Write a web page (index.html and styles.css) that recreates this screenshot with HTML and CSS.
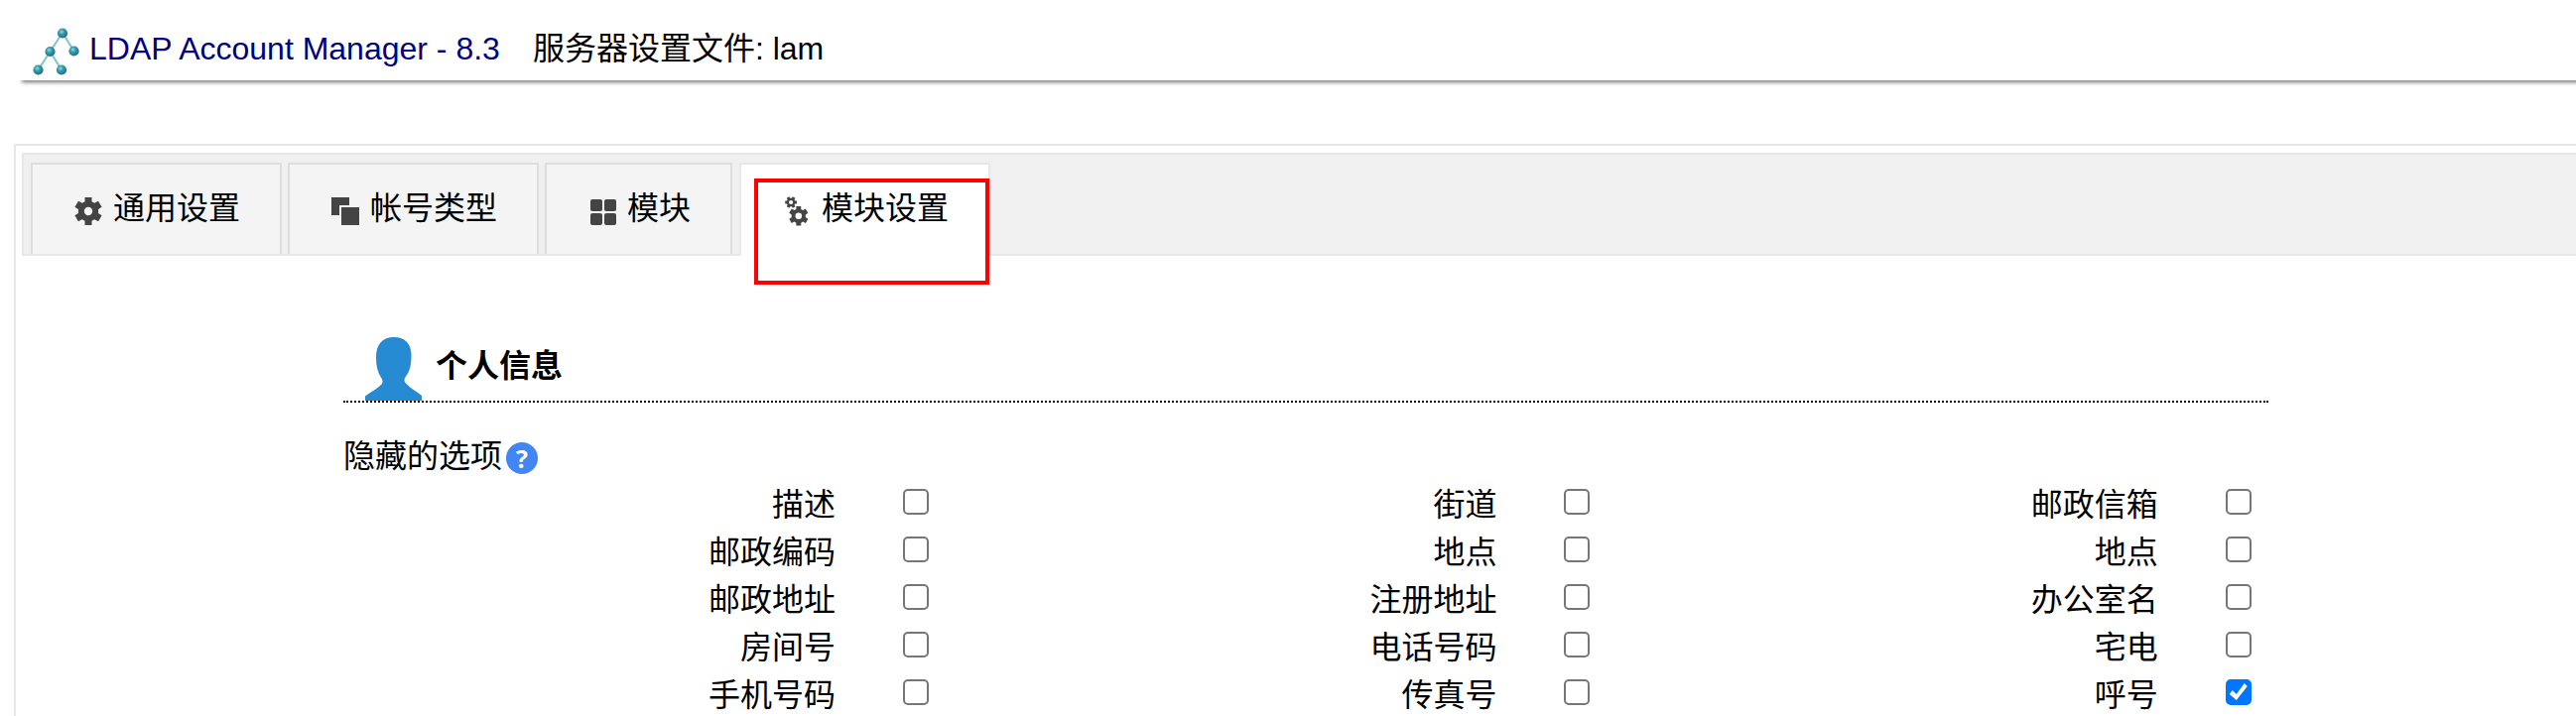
FILE: index.html
```
<!DOCTYPE html>
<html lang="zh-CN">
<head>
<meta charset="utf-8">
<title>LDAP Account Manager</title>
<link rel="stylesheet" href="styles.css">
</head>
<body>
<header class="header">
  <svg class="logo" width="50" height="50" viewBox="0 0 50 50">
    <defs>
      <radialGradient id="ball" cx="0.4" cy="0.35" r="0.65">
        <stop offset="0" stop-color="#8fdce6"/>
        <stop offset="0.4" stop-color="#359dae"/>
        <stop offset="1" stop-color="#256d7a"/>
      </radialGradient>
    </defs>
    <path d="M32 7 19.500 26 7.500 44.500M32 7 43.500 25.500M19.500 26 31 44.500" fill="none" stroke="#86c6d0" stroke-width="2.200"/>
    <g fill="url(#ball)">
      <circle cx="32" cy="7.500" r="5.100"/>
      <circle cx="19.500" cy="26" r="5.100"/>
      <circle cx="43.500" cy="25.500" r="5.100"/>
      <circle cx="7.500" cy="44.500" r="5.100"/>
      <circle cx="31" cy="44.500" r="5.100"/>
    </g>
  </svg>
  <a class="brand">LDAP Account Manager - 8.3</a>
  <span class="file">服务器设置文件: lam</span>
</header>

<main class="panel">
  <nav class="tabs">
    <a class="tab">
      <svg class="icon" width="30" height="28" viewBox="0 0 30 28"><path fill="#444" fill-rule="evenodd" d="M10.500 0h7v4.300l2.600 1.500L24 3.700l3.600 6.100-3.500 2.200v3.900l3.500 2.300-3.500 6.100-3.900-2-2.700 1.500V28h-7v-4.200l-2.700-1.500-3.900 2L.4 18.200l3.500-2.300V12L.4 9.800 4 3.700l3.900 2.100 2.600-1.500zM14 9.800a4.200 4.200 0 1 0 0 8.400 4.200 4.200 0 0 0 0-8.400z"/></svg>
      <span>通用设置</span>
    </a>
    <a class="tab">
      <svg class="icon" width="30" height="28" viewBox="0 0 30 28"><path fill="#444" d="M0 0h18v8H8v10H0zM10 10h18v18H10z"/></svg>
      <span>帐号类型</span>
    </a>
    <a class="tab">
      <svg class="icon" width="30" height="28" viewBox="0 0 30 28"><g fill="#444"><rect x="2" y="2" width="12" height="12" rx="2"/><rect x="16" y="2" width="12" height="12" rx="2"/><rect x="2" y="16" width="12" height="12" rx="2"/><rect x="16" y="16" width="12" height="12" rx="2"/></g></svg>
      <span>模块</span>
    </a>
    <a class="tab active">
      <svg class="icon" width="30" height="30" viewBox="0 0 30 30"><g fill="#444" fill-rule="evenodd">
        <path transform="translate(6 10) scale(.7)" d="M10.500 0h7v4.300l2.600 1.500L24 3.700l3.600 6.100-3.500 2.200v3.900l3.500 2.300-3.500 6.100-3.900-2-2.700 1.500V28h-7v-4.200l-2.700-1.500-3.900 2L.4 18.200l3.500-2.300V12L.4 9.800 4 3.700l3.900 2.100 2.600-1.500zM14 9.300a4.700 4.700 0 1 0 0 9.400 4.700 4.700 0 0 0 0-9.400z"/>
        <path transform="translate(14 6) rotate(90) scale(.42) translate(-14 0)" d="M10.500 0h7v4.300l2.600 1.500L24 3.700l3.600 6.100-3.500 2.200v3.900l3.500 2.300-3.500 6.100-3.900-2-2.700 1.500V28h-7v-4.200l-2.700-1.500-3.900 2L.4 18.200l3.500-2.300V12L.4 9.800 4 3.700l3.900 2.100 2.600-1.500zM14 9a5 5 0 1 0 0 10 5 5 0 0 0 0-10z"/>
      </g></svg>
      <span>模块设置</span>
      <i class="marker"></i>
    </a>
  </nav>

  <section class="module">
    <h2 class="title">
      <svg class="person" width="58" height="64" viewBox="0 0 58 64"><path fill="#268bd2" d="M29 0c11.500 0 17.500 7 17.500 18 0 10-1.300 16-5.500 21.500-2 2.500-2 5.500.5 7.500 4 4.500 10 7.500 15.500 12V64H0v-4.500C5.500 55.500 12 52 16.500 47.500c1.500-1.500 1.500-4-.5-7C12.500 35 11 28.500 11 20 11 7 17.500 0 29 0z"/></svg>
      <span>个人信息</span>
    </h2>
    <div class="hidden-options">
      <span>隐藏的选项</span>
      <span class="help">?</span>
    </div>
    <div class="options">
      <label class="option"><span>描述</span><input type="checkbox"></label>
      <label class="option"><span>街道</span><input type="checkbox"></label>
      <label class="option"><span>邮政信箱</span><input type="checkbox"></label>
      <label class="option"><span>邮政编码</span><input type="checkbox"></label>
      <label class="option"><span>地点</span><input type="checkbox"></label>
      <label class="option"><span>地点</span><input type="checkbox"></label>
      <label class="option"><span>邮政地址</span><input type="checkbox"></label>
      <label class="option"><span>注册地址</span><input type="checkbox"></label>
      <label class="option"><span>办公室名</span><input type="checkbox"></label>
      <label class="option"><span>房间号</span><input type="checkbox"></label>
      <label class="option"><span>电话号码</span><input type="checkbox"></label>
      <label class="option"><span>宅电</span><input type="checkbox"></label>
      <label class="option"><span>手机号码</span><input type="checkbox"></label>
      <label class="option"><span>传真号</span><input type="checkbox"></label>
      <label class="option"><span>呼号</span><input type="checkbox" checked></label>
    </div>
  </section>
</main>
</body>
</html>
```
FILE: styles.css
```
* { box-sizing: border-box; }
html { overflow: hidden; }
body {
  margin: 0;
  height: 722px;
  overflow: hidden;
  background: #fff;
  color: #000;
  font: 32px/48px "Liberation Sans", "Noto Sans CJK SC", sans-serif;
  white-space: nowrap;
}
.header {
  display: flex;
  align-items: center;
  height: 65px;
  margin: 16px -20px 0 16px;
  padding-left: 15px;
  background: #fff;
  box-shadow: 4px 4px 4px -2px #777;
  clip-path: inset(0 0 -12px 0);
}
.logo { margin-top: 4px; }
.brand { margin-left: 9px; color: #000080; }
.file { margin-left: 33px; }
.panel {
  height: 577px;
  margin: 64px -20px 0 14px;
  padding: 7px 6px 0;
  border: 2px solid #e7e7e7;
  border-bottom: 0;
}
.tabs {
  display: flex;
  height: 104px;
  padding: 8px 7px 0;
  border: 2px solid #e7e7e7;
  background: #f0f0f0;
}
.tab {
  position: relative;
  display: flex;
  width: 253px;
  height: 92px;
  margin-right: 6px;
  padding: 20px 0 0 42px;
  border: 2px solid #ddd;
  border-bottom: 0;
  background: #f4f4f4;
}
.tab:nth-child(3) { width: 189px; margin-right: 7px; }
.tab.active { height: 94px; background: #fff; border-color: #e7e7e7; }
.icon { flex: none; margin: 13px 9px 0 0; }
.active .icon { margin-top: 12px; }
.marker {
  position: absolute;
  left: 13px;
  top: 14px;
  width: 237px;
  height: 107px;
  border: 4px solid #f00;
}
.module { margin: 76px 0 0 324px; }
.title {
  display: flex;
  width: 1940px;
  height: 72px;
  margin: 0;
  padding: 6px 0 0 22px;
  border-bottom: 2px dotted #000;
  font-size: 32px;
}
.person { flex: none; margin-right: 13px; }
.title span { margin-top: 5px; }
.hidden-options {
  display: flex;
  align-items: center;
  margin-top: 30px;
}
.help {
  width: 32px;
  height: 32px;
  margin: 4px 0 0 4px;
  border-radius: 50%;
  background: #4285f4;
  color: #fff;
  font: bold 25px/32px "Open Sans", sans-serif;
  text-align: center;
}
.options {
  display: grid;
  grid-template-columns: repeat(3, 666.4px);
  grid-auto-rows: 48px;
}
.option {
  display: grid;
  grid-template-columns: 496px 26px;
  column-gap: 68px;
}
.option span { padding-top: 1px; text-align: right; }
input {
  appearance: none;
  width: 26px;
  height: 26px;
  margin: 9px 0 0;
  border: 2px solid #767676;
  border-radius: 5px;
  background: #fff;
}
input:checked {
  border-color: #0075ff;
  background: #0075ff;
}
input:checked::before {
  content: "";
  display: block;
  width: 22px;
  height: 22px;
  background: #fff;
  clip-path: polygon(2px 13px, 5px 9px, 9px 13px, 17px 2px, 20px 5px, 9px 19px);
}
```
